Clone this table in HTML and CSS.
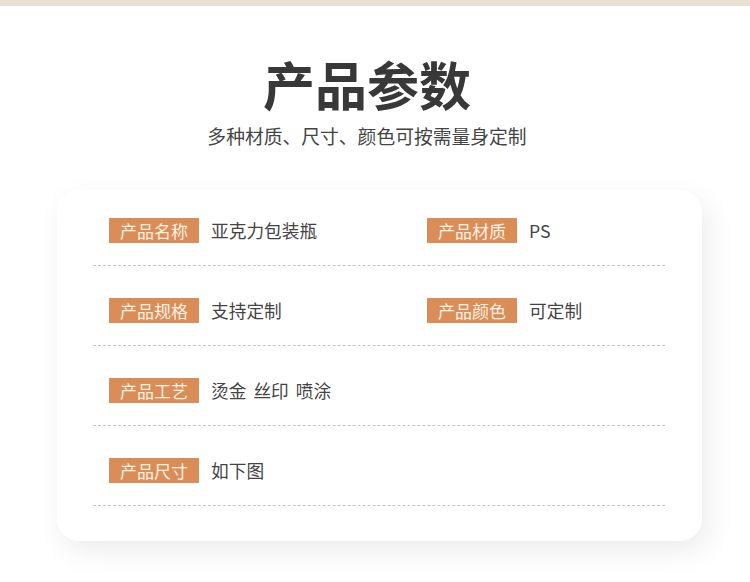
FILE: index.html
```html
<!DOCTYPE html>
<html lang="zh">
<head>
<meta charset="utf-8">
<title>产品参数</title>
<link rel="stylesheet" href="styles.css">
</head>
<body>
<div class="band"></div>
<header class="head">
  <h1 class="title">产品参数</h1>
  <p class="subtitle">多种材质、尺寸、颜色可按需量身定制</p>
</header>
<section class="card">
  <div class="row">
    <div class="item"><span class="label">产品名称</span><span class="value">亚克力包装瓶</span></div>
    <div class="item"><span class="label">产品材质</span><span class="value">PS</span></div>
  </div>
  <div class="row">
    <div class="item"><span class="label">产品规格</span><span class="value">支持定制</span></div>
    <div class="item"><span class="label">产品颜色</span><span class="value">可定制</span></div>
  </div>
  <div class="row">
    <div class="item"><span class="label">产品工艺</span><span class="value"><span class="word">烫金</span><span class="word">丝印</span><span class="word">喷涂</span></span></div>
  </div>
  <div class="row">
    <div class="item"><span class="label">产品尺寸</span><span class="value">如下图</span></div>
  </div>
</section>
</body>
</html>
```
FILE: styles.css
```css
html, body {
  margin: 0;
  padding: 0;
  background: #ffffff;
}
body {
  width: 750px;
  height: 582px;
  overflow: hidden;
  font-family: "Noto Sans CJK SC", "Noto Sans", sans-serif;
  color: #444;
}
.band {
  height: 6px;
  background: #e9e0d4;
}
.head {
  text-align: center;
  margin-right: 16px;
}
.title {
  margin: 52px 0 0;
  font-size: 52px;
  line-height: 52px;
  font-weight: 700;
  color: #383838;
}
.subtitle {
  margin: 16px 0 0;
  font-size: 18.8px;
  line-height: 19px;
  color: #444;
}
.card {
  margin: 45px 0 0 57px;
  width: 645px;
  box-sizing: border-box;
  padding: 28px 37px 35px 36px;
  background: #fff;
  border-radius: 22px;
  box-shadow: 6px 10px 28px rgba(0, 0, 0, 0.08);
}
.row {
  display: grid;
  grid-template-columns: 318px 1fr;
  padding: 0 16px 22px;
  border-bottom: 1px dashed #c4c4c4;
}
.row + .row {
  margin-top: 32px;
}
.item {
  display: flex;
  align-items: center;
  height: 25px;
}
.label {
  display: inline-block;
  width: 90px;
  height: 25px;
  line-height: 25px;
  text-align: center;
  background: #db8d58;
  color: #fdf1e4;
  font-size: 17px;
  margin-right: 12px;
}
.value {
  font-size: 17.7px;
  line-height: 25px;
  color: #444;
}
.word + .word {
  margin-left: 7px;
}
```
